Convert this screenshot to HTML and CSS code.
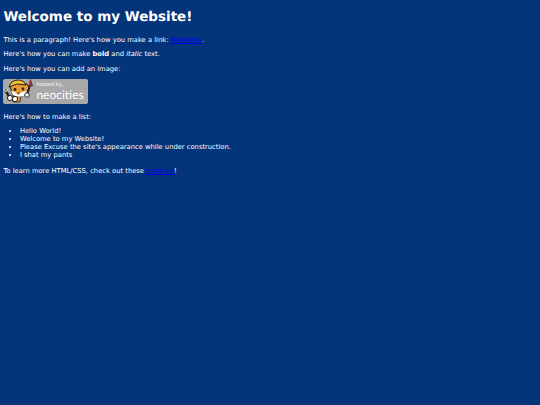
FILE: index.html
```html
<!DOCTYPE html>
<html lang="en">
<head>
    <meta charset="UTF-8">
    <title>Welcome to my Website!</title>
    <link rel="stylesheet" href="styles.css">
</head>
<body>
    <h1>Welcome to my Website!</h1>
    <p>This is a paragraph! Here's how you make a link: <a href="#">Neocities</a>.</p>
    <p>Here's how you can make <strong>bold</strong> and <em>italic</em> text.</p>
    <p>Here's how you can add an image:</p>
    <div class="badge">
        <svg class="cat" width="32" height="25" viewBox="0 0 32 25">
            <!-- wrench + left paw -->
            <path d="M2 11 L4 14 L7 19" stroke="#222" stroke-width="2.4" fill="none"/>
            <path d="M1 10 L3 13 L5 10" stroke="#ddd" stroke-width="1" fill="none"/>
            <circle cx="7" cy="19" r="2.6" fill="#fff" stroke="#222" stroke-width="1"/>
            <!-- body -->
            <path d="M9 17 L10 23 L17 23 L18 17 Z" fill="#e8952c" stroke="#222" stroke-width="0.8"/>
            <circle cx="12" cy="20" r="2.6" fill="#fff" stroke="#222" stroke-width="1"/>
            <!-- head -->
            <path d="M7 7 L9 15 Q15 20 22 16 L26 9 L24 5 L10 4 Z" fill="#ea9a32" stroke="#222" stroke-width="1"/>
            <path d="M8 12 L12 13 L15 16 L19 13 L24 12 L21 17 Q15 19 10 16 Z" fill="#fff"/>
            <circle cx="12" cy="10.5" r="1.4" fill="#222"/>
            <circle cx="20" cy="10" r="1.4" fill="#222"/>
            <circle cx="15.5" cy="14" r="0.8" fill="#222"/>
            <!-- hard hat -->
            <path d="M6 8 Q8 1 15 1 Q21 1 23 6 L14 5 Z" fill="#f0c234" stroke="#222" stroke-width="1"/>
            <!-- paintbrush -->
            <path d="M24 17 L27 6" stroke="#222" stroke-width="1.8"/>
            <path d="M26 7 L27.5 0.5 L29.5 7 Z" fill="#b5332e" stroke="#222" stroke-width="0.6"/>
            <circle cx="24" cy="16" r="2.2" fill="#fff" stroke="#222" stroke-width="0.9"/>
        </svg>
        <div class="badge-text">
            <span class="hosted">hosted by,</span>
            <span class="brand">neocities</span>
        </div>
    </div>
    <p>Here's how to make a list:</p>
    <ul>
        <li>Hello World!</li>
        <li>Welcome to my Website!</li>
        <li>Please Excuse the site's appearance while under construction.</li>
        <li>I shat my pants</li>
    </ul>
    <p>To learn more HTML/CSS, check out these <a href="#">tutorials</a>!</p>
</body>
</html>
```

FILE: styles.css
```css
html, body {
    height: 100%;
}
body {
    margin: 0;
    padding: 0 3.4px;
    background: #04347a;
    color: white;
    font-family: "DejaVu Sans", Verdana, sans-serif;
    font-size: 6.75px;
    line-height: 7.9px;
    text-rendering: geometricPrecision;
}
h1 {
    margin: 0;
    padding-top: 9px;
    padding-bottom: 5px;
    font-size: 13.5px;
    line-height: 16px;
}
p {
    margin: 6.75px 0;
}
a {
    color: #0000ee;
}
ul {
    margin: 6.75px 0 7.5px;
    padding-left: 16.5px;
}
.badge {
    display: flex;
    width: 85px;
    height: 25px;
    margin-top: -1.7px;
    margin-bottom: 9.75px;
    background: #a8a8a8;
    border-radius: 2px;
    color: white;
}
.cat {
    flex: none;
}
.badge-text {
    display: flex;
    flex-direction: column;
    gap: 2px;
    padding: 2px 0 0 1px;
}
.hosted {
    font-family: "Open Sans", sans-serif;
    font-size: 5.5px;
    line-height: 6px;
}
.brand {
    font-family: Lato, sans-serif;
    font-size: 12px;
    line-height: 12px;
}
```
